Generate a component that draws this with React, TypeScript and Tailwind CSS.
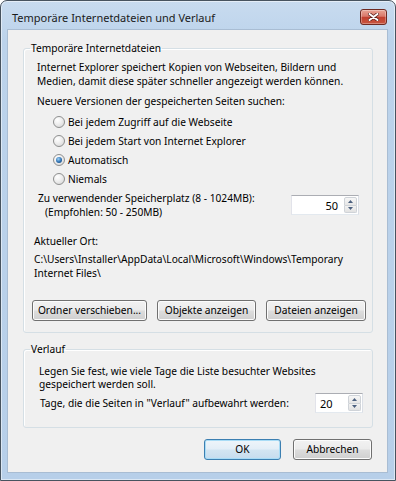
import React from "react";

function Btn({
  children,
  className = "",
  primary = false,
}: {
  children: React.ReactNode;
  className?: string;
  primary?: boolean;
}) {
  return (
    <div
      className={`h-[21px] flex items-center justify-center rounded-[3px] border leading-none ${
        primary
          ? "border-[#3c7fb1] bg-[linear-gradient(180deg,#eef5fa_0%,#e3eef7_48%,#d3e5f2_52%,#c6dcee_100%)] shadow-[inset_0_0_0_1px_#a9dcf6]"
          : "border-[#707070] bg-[linear-gradient(180deg,#f2f2f2_0%,#ebebeb_48%,#dddddd_52%,#cfcfcf_100%)] shadow-[inset_0_0_0_1px_#fcfcfc]"
      } ${className}`}
    >
      {children}
    </div>
  );
}

function Arrow({ up }: { up: boolean }) {
  return (
    <svg width="5" height="3" viewBox="0 0 5 3">
      {up ? (
        <path d="M0 3 L2.5 0 L5 3 Z" fill="#4c607f" />
      ) : (
        <path d="M0 0 L2.5 3 L5 0 Z" fill="#4c607f" />
      )}
    </svg>
  );
}

function Spinner({
  value,
  className = "",
  left = false,
}: {
  value: string;
  className?: string;
  left?: boolean;
}) {
  return (
    <div
      className={`h-[20px] flex border border-[#abadb3] border-l-[#e2e3ea] border-r-[#dbdfe6] border-b-[#e3e9ef] bg-white ${className}`}
    >
      <div
        className={`flex-1 flex items-center leading-none text-[11px] ${
          left ? "justify-start pl-[4px]" : "justify-end pr-[5px]"
        }`}
      >
        {value}
      </div>
      <div className="w-[15px] flex flex-col p-[1px]">
        <div className="flex-1 flex items-center justify-center border border-[#cfd3d8] rounded-t-[2px] bg-[linear-gradient(180deg,#f7f7f7,#e6e6e6)]">
          <Arrow up />
        </div>
        <div className="flex-1 flex items-center justify-center border border-t-0 border-[#cfd3d8] rounded-b-[2px] bg-[linear-gradient(180deg,#f2f2f2,#e2e2e2)]">
          <Arrow up={false} />
        </div>
      </div>
    </div>
  );
}

function Radio({ label, checked = false }: { label: string; checked?: boolean }) {
  return (
    <div className="h-[19px] flex items-center pl-[16px] gap-[3px]">
      <span className="w-[12px] h-[12px] rounded-full border border-[#8e8f8f] bg-[radial-gradient(circle_at_35%_30%,#ffffff_0%,#f0f0f0_40%,#d2d2d2_100%)] flex items-center justify-center shrink-0">
        {checked && (
          <span className="w-[6px] h-[6px] rounded-full bg-[radial-gradient(circle_at_40%_35%,#9fd4fa_0%,#2c6fb0_55%,#0f3c6e_100%)]" />
        )}
      </span>
      <span>{label}</span>
    </div>
  );
}

export default function App() {
  return (
    <div className="w-[396px] h-[481px] font-['Noto_Sans',sans-serif] text-black">
      <div className="w-[396px] h-[481px] flex flex-col border border-[#47535f] rounded-t-[7px] bg-[linear-gradient(180deg,#c8dbef_0%,#bcd3eb_40px,#b7cfe9_100%)] shadow-[inset_0_0_0_1px_rgba(255,255,255,0.5)]">
        {/* Title bar */}
        <div className="h-[29px] shrink-0 flex items-start">
          <div className="pl-[11px] pt-[9px] text-[11px] leading-[16px] text-[#1b1b1b]">
            Temporäre Internetdateien und Verlauf
          </div>
          <div className="ml-auto mr-[8px] mt-[8px] w-[27px] h-[16px] rounded-[3px] border border-[#6e2a22] bg-[linear-gradient(180deg,#e9a595_0%,#d9786a_45%,#c2402f_52%,#c8553f_100%)] shadow-[inset_0_0_0_1px_rgba(255,255,255,0.3)] flex items-center justify-center">
            <svg width="11" height="8" viewBox="0 0 11 8">
              <path d="M1.5 1 L9.5 7 M9.5 1 L1.5 7" stroke="#5a1f1a" strokeWidth="3.4" strokeLinecap="round" />
              <path d="M1.5 1 L9.5 7 M9.5 1 L1.5 7" stroke="#ffffff" strokeWidth="2" strokeLinecap="round" />
            </svg>
          </div>
        </div>

        {/* Client */}
        <div className="ml-[7px] w-[379px] h-[442px] bg-[#f0f0f0] flex flex-col shadow-[0_0_0_1px_#a9bdd3] text-[10.2px] leading-[14px]">
          <fieldset className="mt-[11px] ml-[15px] w-[350px] min-w-0 border border-[#d5dfe5] rounded-[3px] px-[6px] pb-[11px] shadow-[inset_1px_1px_0_#ffffff]">
            <legend className="px-[1px] leading-[14px]">Temporäre Internetdateien</legend>
            <div className="pl-[7px] pr-[7px] pt-[5px]">
              <p>Internet Explorer speichert Kopien von Webseiten, Bildern und</p>
              <p>Medien, damit diese später schneller angezeigt werden können.</p>
              <p className="mt-[6px]">Neuere Versionen der gespeicherten Seiten suchen:</p>
              <div className="mt-[4px] flex flex-col">
                <Radio label="Bei jedem Zugriff auf die Webseite" />
                <Radio label="Bei jedem Start von Internet Explorer" />
                <Radio label="Automatisch" checked />
                <Radio label="Niemals" />
              </div>
              <div className="mt-[3px] flex items-start">
                <div className="pl-[1px]">
                  <p>Zu verwendender Speicherplatz (8 - 1024MB):</p>
                  <p className="pl-[7px]">(Empfohlen: 50 - 250MB)</p>
                </div>
                <Spinner value="50" className="ml-auto mt-[4px] w-[68px] shrink-0" />
              </div>
              <p className="mt-[15px] -ml-[3px]">Aktueller Ort:</p>
              <p className="mt-[4px] -ml-[3px] whitespace-nowrap">
                C:\Users\Installer\AppData\Local\Microsoft\Windows\Temporary
                <br />
                Internet Files\
              </p>
              <div className="mt-[20px] -ml-[5px] flex gap-[10px]">
                <Btn className="w-[115px] shrink-0">Ordner verschieben...</Btn>
                <Btn className="w-[99px] shrink-0">Objekte anzeigen</Btn>
                <Btn className="w-[100px] shrink-0">Dateien anzeigen</Btn>
              </div>
            </div>
          </fieldset>

          <fieldset className="mt-[9px] ml-[15px] w-[350px] min-w-0 border border-[#d5dfe5] rounded-[3px] px-[6px] pb-[14px] shadow-[inset_1px_1px_0_#ffffff]">
            <legend className="px-[1px] leading-[14px]">Verlauf</legend>
            <div className="pl-[7px] pr-[7px] pt-[9px]">
              <div className="pl-[2px] leading-[13px]">
                <p>Legen Sie fest, wie viele Tage die Liste besuchter Websites</p>
                <p>gespeichert werden soll.</p>
              </div>
              <div className="mt-[2px] h-[20px] flex items-center pl-[3px]">
                <span>Tage, die die Seiten in "Verlauf" aufbewahrt werden:</span>
                <Spinner value="20" left className="ml-auto -mr-[4px] w-[48px] shrink-0" />
              </div>
            </div>
          </fieldset>

          <div className="mt-[11px] flex justify-end gap-[12px] pr-[15px]">
            <Btn primary className="w-[77px]">OK</Btn>
            <Btn className="w-[79px]">Abbrechen</Btn>
          </div>
        </div>
      </div>
    </div>
  );
}
